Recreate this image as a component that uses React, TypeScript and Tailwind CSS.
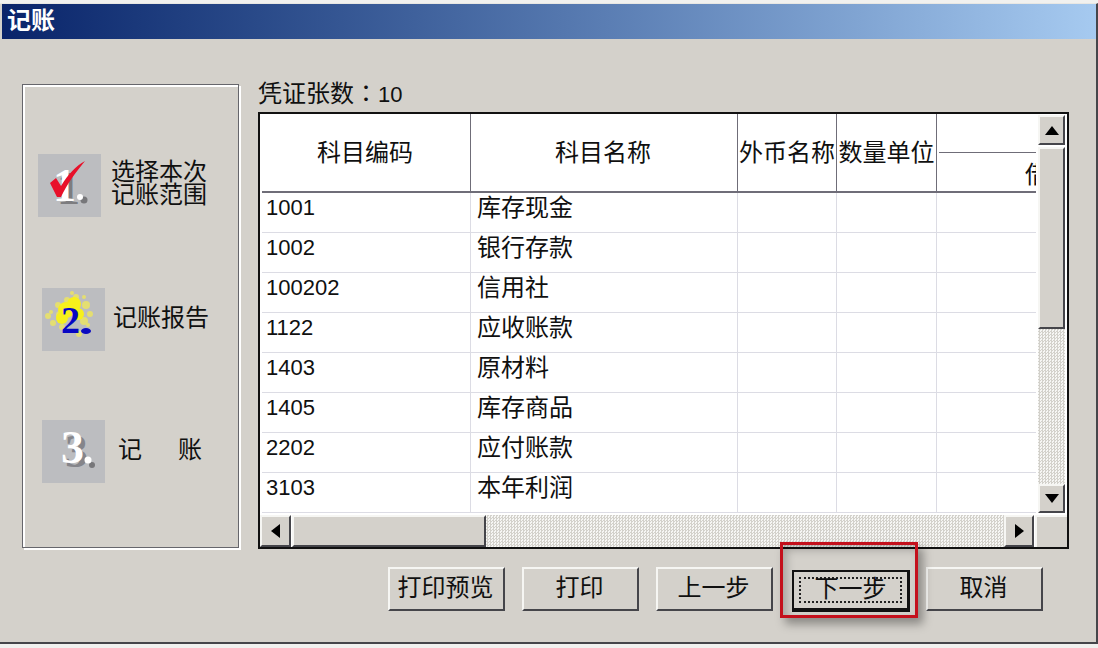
const rows = [
  ["1001", "库存现金"],
  ["1002", "银行存款"],
  ["100202", "信用社"],
  ["1122", "应收账款"],
  ["1403", "原材料"],
  ["1405", "库存商品"],
  ["2202", "应付账款"],
  ["3103", "本年利润"],
];

const raised =
  "border-2 border-t-[#f6f6f3] border-l-[#f6f6f3] border-r-[#45454a] border-b-[#45454a] bg-[#d4d1cb]";
const dither =
  "bg-[repeating-conic-gradient(#d3d1cb_0_25%,#f6f6f4_0_50%)] bg-[length:3px_3px]";

function Arrow({ dir }: { dir: "up" | "down" | "left" | "right" }) {
  const points = {
    up: "0,9 7,0 14,9",
    down: "0,0 14,0 7,9",
    left: "9,0 9,14 0,7",
    right: "0,0 0,14 9,7",
  }[dir];
  const size = dir === "up" || dir === "down" ? "w-[14px] h-[9px]" : "w-[9px] h-[14px]";
  return (
    <svg
      className={size}
      viewBox={dir === "up" || dir === "down" ? "0 0 14 9" : "0 0 9 14"}
    >
      <polygon points={points} fill="#000" />
    </svg>
  );
}

function IconOne() {
  return (
    <svg className="w-[63px] h-[63px] shrink-0 bg-[#bcbdc0]" viewBox="0 0 63 63">
      <text x="19" y="50" fontSize="46" fontWeight="700" fill="#7d7d80" fontFamily="Liberation Serif">1</text>
      <text x="15" y="47" fontSize="46" fontWeight="700" fill="#fff" fontFamily="Liberation Serif">1</text>
      <circle cx="46" cy="46" r="3.5" fill="#77777a" />
      <circle cx="42" cy="43" r="3" fill="#fff" />
      <path d="M12 29 L18 24 L23 32 C30 20 38 12 47 7 C38 18 29 30 23 43 L19 43 Z" fill="#e8102a" />
    </svg>
  );
}

function IconTwo() {
  const core = [
    [24, 22, 8], [32, 16, 7], [20, 30, 6], [36, 26, 6],
  ];
  const pale = [
    [18, 27, 4], [34, 9, 3], [44, 17, 4], [48, 26, 3], [30, 5, 2], [42, 9, 2], [6, 28, 3],
    [11, 35, 3], [9, 24, 2], [25, 12, 3], [42, 33, 4], [37, 46, 3], [16, 17, 3], [20, 39, 3], [46, 37, 2], [28, 43, 2],
  ];
  return (
    <svg className="w-[63px] h-[63px] shrink-0 bg-[#bcbdc0]" viewBox="0 0 63 63">
      {pale.map(([cx, cy, r], i) => (
        <circle key={i} cx={cx} cy={cy} r={r} fill="#e4de72" />
      ))}
      {core.map(([cx, cy, r], i) => (
        <circle key={i} cx={cx} cy={cy} r={r} fill="#f7f01c" />
      ))}
      <ellipse cx="44" cy="43" rx="5" ry="3" fill="#0a0ac0" />
      <text x="19" y="45" fontSize="38" fontWeight="700" fill="#0606c4" fontFamily="Liberation Serif">2</text>
    </svg>
  );
}

function IconThree() {
  return (
    <svg className="w-[63px] h-[63px] shrink-0 bg-[#bcbdc0]" viewBox="0 0 63 63">
      <text x="23" y="47" fontSize="46" fontWeight="700" fill="#85858a" fontFamily="Liberation Serif">3</text>
      <text x="19" y="43" fontSize="46" fontWeight="700" fill="#fff" fontFamily="Liberation Serif">3</text>
      <circle cx="50" cy="45" r="3" fill="#77777a" />
      <circle cx="46" cy="40" r="3.5" fill="#fff" />
    </svg>
  );
}

function DialogButton({ label, className = "" }: { label: string; className?: string }) {
  return (
    <button className={`w-[117px] h-[44px] flex items-center justify-center pb-[7px] pr-[2px] ${raised} ${className}`}>
      {label}
    </button>
  );
}

export default function App() {
  return (
    <div className="w-[1098px] h-[648px] bg-[#f1f1ef] pt-[3px] overflow-hidden text-[24px] leading-[24px] text-[#101010] font-['Noto_Sans_CJK_SC',sans-serif]">
      <div className="h-[641px] bg-[#d4d1cb] border-b-2 border-r-2 border-[#45454a] border-t border-t-[#e8e7e3]">
        {/* title bar */}
        <div className="ml-[2px] h-[35px] flex items-center pl-[5px] pb-[5px] font-bold text-white bg-gradient-to-r from-[#0a246a] to-[#a6caf0]">
          记账
        </div>

        <div className="flex pl-[22px] pt-[41px]">
          {/* steps */}
          <div className="mt-[4px] w-[217px] h-[464px] border border-[#66666c] shadow-[inset_2px_2px_0_#fff,2px_2px_0_#fff]">
            <div className="flex items-center mt-[69px] ml-[15px]">
              <IconOne />
              <div className="ml-[10px] pb-[10px] leading-[23px]">
                <div>选择本次</div>
                <div>记账范围</div>
              </div>
            </div>
            <div className="flex items-center mt-[71px] ml-[19px]">
              <IconTwo />
              <div className="ml-[8px] pb-[7px]">记账报告</div>
            </div>
            <div className="flex items-center gap-[36px] mt-[69px] ml-[19px]">
              <IconThree />
              <div className="-ml-[23px] pb-[7px]">记</div>
              <div className="pb-[7px]">账</div>
            </div>
          </div>

          <div className="ml-[19px]">
            <div className="h-[32px]">
              凭证张数<span className="font-['Noto_Sans_CJK_TC',sans-serif]">：</span>
              <span className="font-['Liberation_Sans',sans-serif] text-[22px]">10</span>
            </div>

            {/* voucher grid */}
            <div className="w-[811px] h-[437px] border-2 border-[#111] bg-white flex flex-col">
              <div className="flex h-[401px]">
                <div className="w-[776px] overflow-hidden pl-[2px]">
                  <div className="grid grid-cols-[209px_267px_99px_100px_99px] grid-rows-[79px_repeat(8,40px)]">
                    <div className="border-r border-b-2 border-[#6f6d78] flex items-center justify-center pb-[3px] pr-[2px]">科目编码</div>
                    <div className="border-r border-b-2 border-[#6f6d78] flex items-center justify-center pb-[3px] pr-[2px]">科目名称</div>
                    <div className="border-r border-b-2 border-[#6f6d78] flex items-center justify-center pb-[3px] whitespace-nowrap">外币名称</div>
                    <div className="border-r border-b-2 border-[#6f6d78] flex items-center justify-center pb-[3px] whitespace-nowrap">数量单位</div>
                    <div className="border-b-2 border-[#6f6d78] overflow-hidden pl-[2px]">
                      <div className="h-[39px] border-b border-[#6f6d78]" />
                      <div className="pl-[86px] pt-[8px] whitespace-nowrap">借方金额</div>
                    </div>
                    {rows.map(([code, name]) => (
                      <div key={code} className="contents">
                        <div className="border-r border-b border-[#dcdce4] flex items-center pb-[10px] pl-[4px] text-[22px] font-['Liberation_Sans',sans-serif]">{code}</div>
                        <div className="border-r border-b border-[#dcdce4] flex items-center pb-[13px] pl-[6px]">{name}</div>
                        <div className="border-r border-b border-[#dcdce4]" />
                        <div className="border-r border-b border-[#dcdce4]" />
                        <div className="border-b border-[#dcdce4]" />
                      </div>
                    ))}
                  </div>
                </div>

                {/* vertical scrollbar */}
                <div className="w-[31px] flex flex-col pl-[2px] pr-[2px] pt-[1px]">
                  <div className={`h-[30px] flex items-center justify-center ${raised}`}>
                    <Arrow dir="up" />
                  </div>
                  <div className={`h-[182px] mt-[2px] ${raised}`} />
                  <div className={`flex-1 ${dither}`} />
                  <div className={`h-[29px] flex items-center justify-center ${raised}`}>
                    <Arrow dir="down" />
                  </div>
                  <div className="h-[2px]" />
                </div>
              </div>

              {/* horizontal scrollbar */}
              <div className="flex flex-1">
                <div className={`w-[31px] flex items-center justify-center ${raised}`}>
                  <Arrow dir="left" />
                </div>
                <div className={`w-[194px] ml-[1px] ${raised}`} />
                <div className={`flex-1 ${dither}`} />
                <div className={`w-[30px] flex items-center justify-center ${raised}`}>
                  <Arrow dir="right" />
                </div>
                <div className="w-[32px] ml-[1px] bg-[#d4d1cb] border-t-2 border-l-2 border-[#f6f6f3]" />
              </div>
            </div>

            {/* actions */}
            <div className="flex items-start gap-[17px] ml-[130px] mt-[18px]">
              <DialogButton label="打印预览" />
              <DialogButton label="打印" />
              <DialogButton label="上一步" />
              <div className="relative ml-[2px] mt-[3px]">
                <button className="w-[118px] h-[42px] bg-[#d4d1cb] border-2 border-[#111] border-r-[3px] border-b-[4px] p-[5px]">
                  <div className="h-full border-2 border-dotted border-[#222] flex items-center justify-center">
                    <span className="-mt-[7px]">下一步</span>
                  </div>
                </button>
                {/* annotation box */}
                <div className="absolute -left-[12px] -top-[28px] w-[138px] h-[76px] border-[3px] border-[#c4101c] shadow-[5px_6px_9px_rgba(0,0,0,0.35),inset_4px_5px_8px_rgba(0,0,0,0.22)]" />
              </div>
              <DialogButton label="取消" className="-ml-[1px]" />
            </div>
          </div>
        </div>
      </div>
    </div>
  );
}
